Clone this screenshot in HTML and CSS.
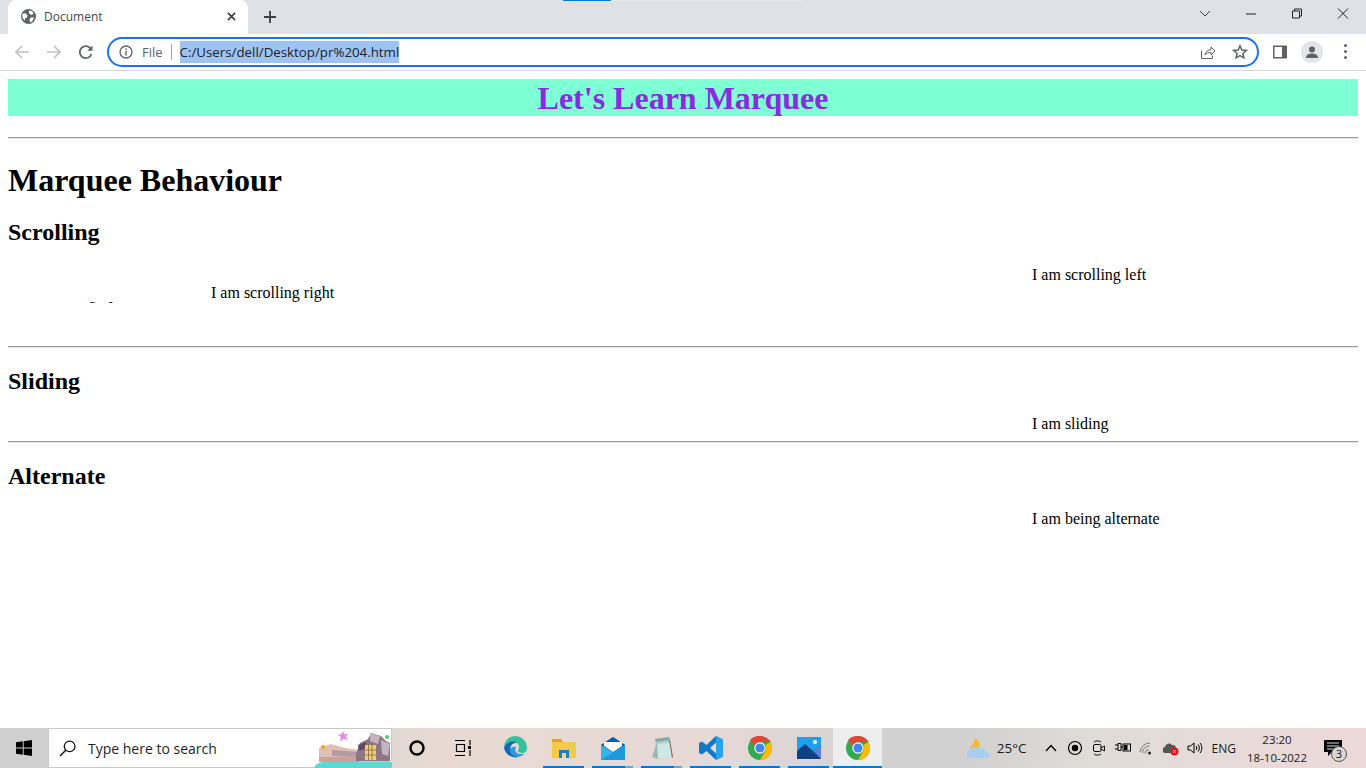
FILE: index.html
```html
<!DOCTYPE html>
<html lang="en">
<head>
    <meta charset="UTF-8">
    <title>Document</title>
    <link rel="stylesheet" href="styles.css">
</head>
<body>
    <div class="screen">
        <div class="tabstrip">
            <div class="load-line"></div>
            <div class="load-rest"></div>
            <div class="tab">
                <svg class="favicon" viewBox="0 0 16 16"><circle cx="8" cy="8" r="8" fill="#5f6368"/><path d="M1.500 5l3-.5 2.500 2.500-1 2.500H4.500l-.5 3-2.500-3.500zM8.500 1.500l3.500.8 1.500 2.700-2.500 1.500-2.500-2zM10.500 9h3.500l-1.500 3.500-2.500 2-1-3z" fill="#fff"/></svg>
                <span class="tab-title">Document</span>
                <svg class="tab-close" viewBox="0 0 10 10"><path d="M1 1l8 8M9 1l-8 8" stroke="#3c4043" stroke-width="1.800" fill="none"/></svg>
            </div>
            <svg class="new-tab" viewBox="0 0 12 12"><path d="M6 0v12M0 6h12" stroke="#3c4043" stroke-width="1.800" fill="none"/></svg>
            <div class="window-controls">
                <svg class="win-icon" viewBox="0 0 12 12"><path d="M1 3.500l5 5 5-5" stroke="#3c4043" fill="none"/></svg>
                <svg class="win-icon" viewBox="0 0 12 12"><path d="M1 6.500h10" stroke="#202124" fill="none"/></svg>
                <svg class="win-icon" viewBox="0 0 12 12"><path d="M1.500 3.500h7v7h-7zM3.500 3.500v-2h7v7h-2" stroke="#202124" fill="none"/></svg>
                <svg class="win-icon" viewBox="0 0 12 12"><path d="M1 1l10 10M11 1l-10 10" stroke="#202124" fill="none"/></svg>
            </div>
        </div>

        <div class="toolbar">
            <svg class="nav-icon" viewBox="0 0 16 16"><path d="M15 8H2M8 2L2 8l6 6" stroke="#bdc1c6" stroke-width="1.700" fill="none"/></svg>
            <svg class="nav-icon" viewBox="0 0 16 16"><path d="M1 8h13M8 2l6 6-6 6" stroke="#bdc1c6" stroke-width="1.700" fill="none"/></svg>
            <svg class="nav-icon" viewBox="0 0 16 16"><path d="M13.500 10a6 6 0 1 1-.6-5" stroke="#5f6368" stroke-width="1.800" fill="none"/><path d="M14.500 1.500v5.200h-5.200z" fill="#5f6368"/></svg>
            <div class="omnibox">
                <svg class="info-icon" viewBox="0 0 14 14"><circle cx="7" cy="7" r="6" stroke="#5f6368" stroke-width="1.300" fill="none"/><path d="M7 6v4.500M7 3.500v1.500" stroke="#5f6368" stroke-width="1.400"/></svg>
                <span class="scheme">File</span>
                <span class="divider"></span>
                <span class="url">C:/Users/dell/Desktop/pr%204.html</span>
                <svg class="share-icon" viewBox="0 0 16 16"><path d="M1.500 6.500v8h11v-3" stroke="#5f6368" fill="none"/><path d="M5 11c.5-3.500 3-5.300 6-5.300V3l4 4-4 4V8.300c-2.500 0-4.500.8-6 2.700z" stroke="#5f6368" fill="none"/></svg>
                <svg class="star-icon" viewBox="0 0 16 16"><path d="M8 1.800l1.800 4.200 4.500.4-3.400 3 1 4.400L8 11.500l-3.900 2.300 1-4.400-3.400-3 4.500-.4z" stroke="#5f6368" stroke-width="1.500" fill="none"/></svg>
            </div>
            <svg class="side-icon" viewBox="0 0 14 14"><rect width="14" height="13" y="0.500" fill="#5f6368"/><rect x="1.500" y="2" width="7.500" height="10" fill="#fff"/></svg>
            <div class="avatar"><svg viewBox="0 0 14 14"><circle cx="7" cy="4.500" r="3" fill="#5f6368"/><path d="M1 13c0-3.500 3-4.500 6-4.500s6 1 6 4.500z" fill="#5f6368"/></svg></div>
            <div class="menu-dots"><i></i><i></i><i></i></div>
        </div>

        <main class="page">
            <div class="banner"><h1>Let's Learn Marquee</h1></div>
            <hr>
            <h1 class="title">Marquee Behaviour</h1>
            <h2>Scrolling</h2>
            <div class="scroll-row">
                <div class="up-box"><div class="up-text">I am scrolling up</div></div>
                <div class="right-text">I am scrolling right</div>
                <div class="left-text">I am scrolling left</div>
            </div>
            <hr class="rule-scroll">
            <h2>Sliding</h2>
            <div class="line-row">I am sliding</div>
            <hr class="rule-slide">
            <h2>Alternate</h2>
            <div class="line-row">I am being alternate</div>
        </main>

        <footer class="taskbar">
            <svg class="start" viewBox="0 0 16 16"><path d="M0 2.300l6.800-1v6.300H0zM7.700 1.200L16 0v7.600H7.700zM0 8.400h6.800v6.300l-6.800-1zM7.700 8.400H16V16l-8.300-1.200z" fill="#000"/></svg>
            <div class="search">
                <svg class="search-icon" viewBox="0 0 16 16"><circle cx="10" cy="6" r="5" stroke="#111" stroke-width="1.200" fill="none"/><path d="M6.300 9.700L1 15" stroke="#111" stroke-width="1.400"/></svg>
                <span class="search-text">Type here to search</span>
                <svg class="search-art" viewBox="0 0 78 38">
                    <path d="M0 38c2-5 6-6 12-6h66v6z" fill="#62d6d6"/>
                    <path d="M5 32V18l12-4 14 4 14 2 31 6v6z" fill="#e0bfb4"/>
                    <path d="M5 27h40v5H5z" fill="#c9a39a"/>
                    <path d="M18 20l27 2v5l-27-1z" fill="#b79aa0"/>
                    <path d="M42 24l4-11 8-4 3-6 10 3 5 5 4 2v18H42z" fill="#8c7684"/>
                    <path d="M56 3l10 3-2 8-8-3zM67 10l9 4-2 12-6-2z" fill="#c4b4bd"/>
                    <path d="M44 15l8-3 1 6-8 3z" fill="#5f4c60"/>
                    <rect x="51" y="15" width="11" height="15" fill="#f0cd6e"/>
                    <path d="M54.500 15v15M58 15v15M51 20h11M51 25h11" stroke="#8a6a3e" stroke-width=".8"/>
                    <path d="M29 1l1.500 3.500 4-1-2.500 3 2 4-4-1.800-4 2.800.8-4.500-3.300-2.500 4-.2z" fill="#e58be8"/>
                    <circle cx="9" cy="17" r="2" fill="#f5a623"/><circle cx="73" cy="7" r="2" fill="#4cc97a"/>
                </svg>
            </div>
            <div class="task-icons">
                <div class="task"><svg class="cortana" viewBox="0 0 18 18"><circle cx="9" cy="9" r="6.500" stroke="#000" stroke-width="2.400" fill="none"/></svg></div>
                <div class="task"><svg class="taskview" viewBox="0 0 18 18"><path d="M1 1.500h10M1 16.500h10M2.500 5.500h8v7h-8zM16 1v5M16 11v6" stroke="#000" stroke-width="1.200" fill="none"/><rect x="14" y="7" width="3" height="3" fill="#000"/></svg></div>
                <div class="task"><svg viewBox="0 0 24 24"><path d="M12 0a12 12 0 0 1 12 12c0 3-2 5-5 5-3 0-5-1.500-4-3 .5-1 1-1.500 1-3 0-3-3-5-6-5C6 6 2 9 1 12 1 5 6 0 12 0z" fill="#36c0a0"/><path d="M1 12c1-4 5-6.500 9-6.500 2 0 3 .5 3.500 1.500-5 0-6.500 3.500-6 7 .5 4 4 6.500 8 6.500 1 0 2-.2 3-.6A12 12 0 0 1 1 12z" fill="#1466b8"/><path d="M7 14c.5 4 4 7 8.500 6.500 3-.3 5-1.500 6-3-1 .5-2 .5-3 .5-4 0-7-2-6-5 0-.5.300-1.500 1-2-3-.5-6 0-6.500 3z" fill="#2a9fe0"/></svg></div>
                <div class="task running"><svg viewBox="0 0 24 24"><path d="M0 3h9l2 3h13v16H0z" fill="#f7c94b"/><path d="M0 3h9l2 3H0z" fill="#d9a032"/><path d="M7 14h10v8h-3v-5h-4v5H7z" fill="#1b7fc4"/><rect x="10" y="17" width="4" height="5" fill="#f6d98a"/></svg></div>
                <div class="task running partial"><svg viewBox="0 0 24 24"><path d="M0 9L12 1l12 8v15H0z" fill="#1c8ed8"/><path d="M0 9L12 1l12 8-12 7z" fill="#0a5ea8"/><path d="M3 10V6h18v4l-9 6z" fill="#fff"/><path d="M0 9l12 8 12-8v15H0z" fill="#35b5ee"/><path d="M0 24l24-15v15z" fill="#1d9ade"/></svg></div>
                <div class="task running partial"><svg viewBox="0 0 24 24"><path d="M5 3l14-2 3 20-15 2z" fill="#a8d0d2"/><path d="M5 3l14-2 1 3-14 2z" fill="#88a8a8"/><path d="M6 8l14-1 2 14-15 2z" fill="#cfe8e6"/><path d="M2 21l5-15 1 17z" fill="#9ab8b8"/><path d="M20 4l3 17-1 1-3-18z" fill="#7a6a55"/></svg></div>
                <div class="task running"><svg viewBox="0 0 24 24"><path d="M17 0l7 3.500v17L17 24 7.500 15 3 18.500 0 17V7l3-1.500L7.500 9zM17 6.500L11 12l6 5.500z" fill="#0f7ac8"/><path d="M17 0l7 3.500v17L17 24z" fill="#2aa3ea"/></svg></div>
                <div class="task running"><svg viewBox="0 0 24 24"><use href="#chrome"/></svg></div>
                <div class="task running"><svg viewBox="0 0 24 24"><rect width="24" height="22" y="1" fill="#1aa3e8"/><path d="M0 23V15l8-7 8 7 8-5v13z" fill="#123f82"/><path d="M16 15l8-5v13z" fill="#5a80d8"/><circle cx="18" cy="6" r="2" fill="#fff"/></svg></div>
                <div class="task running active"><svg viewBox="0 0 24 24">
                    <defs><g id="chrome">
                        <circle cx="12" cy="12" r="12" fill="#34a853"/>
                        <path d="M12 0a12 12 0 0 1 10.400 6H12a6 6 0 0 0-5.500 3.500L2 3.800A12 12 0 0 1 12 0z" fill="#ea4335"/>
                        <path d="M22.400 6A12 12 0 0 1 12 24l5-8.600A6 6 0 0 0 17.500 9z" fill="#fbbc04"/>
                        <circle cx="12" cy="12" r="5.700" fill="#fff"/><circle cx="12" cy="12" r="4.500" fill="#4285f4"/>
                    </g></defs>
                    <use href="#chrome"/></svg></div>
            </div>
            <div class="tray">
                <svg class="weather" viewBox="0 0 24 22"><path d="M3 10C6 10 9 7 8.500 1c5 2 6.500 7 4 11-3 2-7 1-9.500-2z" fill="#f5b82e"/><path d="M5 21a4 4 0 0 1-.5-8c1-3 6-4.500 9-1.500 3-1 6 1 5.500 3.500 3 0 4.500 1.500 4.500 3 0 2-2 3-4 3z" fill="#a9cdee"/></svg>
                <span class="temp">25°C</span>
                <svg class="tray-chevron" viewBox="0 0 12 8"><path d="M1 7l5-5.500L11 7" stroke="#000" stroke-width="1.300" fill="none"/></svg>
                <svg class="tray-icon" viewBox="0 0 16 16"><circle cx="8" cy="8" r="6.500" stroke="#000" stroke-width="1.200" fill="none"/><circle cx="8" cy="8" r="3.200" fill="#000"/></svg>
                <svg class="tray-icon" viewBox="0 0 16 16"><rect x="2.500" y="4.500" width="7.500" height="7" rx="1.500" stroke="#000" fill="none"/><path d="M10 8l3.500-2v5L10 9M3 2c2-1.500 5-1.500 7 0M3 14c2 1.500 5 1.500 7 0" stroke="#000" stroke-width=".9" fill="none"/></svg>
                <svg class="tray-icon" viewBox="0 0 16 16"><path d="M0 5h3M0 9h3M3 3.500h3v7H3zM6 7h2" stroke="#000" fill="none"/><rect x="8" y="4" width="7.500" height="7" stroke="#000" fill="none"/><rect x="9" y="5" width="3.500" height="5" fill="#000"/></svg>
                <svg class="tray-icon" viewBox="0 0 16 16"><path d="M1 12a10 10 0 0 1 10-9M3.500 13a7 7 0 0 1 7-7M6 13.500a4 4 0 0 1 4-4" stroke="#777" stroke-width="1" fill="none"/><circle cx="10.500" cy="13" r="1.500" fill="#222"/></svg>
                <svg class="tray-icon" viewBox="0 0 16 16"><path d="M3 13a3 3 0 0 1-1-6 4 4 0 0 1 7-2 3.500 3.500 0 0 1 4 3v1H8v4z" fill="#555"/><circle cx="11.500" cy="11.500" r="4" fill="#e81123"/><path d="M10 10l3 3M13 10l-3 3" stroke="#fff"/></svg>
                <svg class="tray-icon" viewBox="0 0 16 16"><path d="M1 6h2.500L7 3v10l-3.500-3H1z" stroke="#000" fill="none"/><path d="M9 6c1 1 1 3 0 4M11 4.500c1.800 2 1.800 5 0 7M13 3c2.500 3 2.500 7 0 10" stroke="#000" fill="none"/></svg>
                <span class="lang">ENG</span>
                <div class="clock"><span>23:20</span><span>18-10-2022</span></div>
                <div class="notify">
                    <svg viewBox="0 0 18 16"><path d="M0 0h18v12H8l-4 4v-4H0z" fill="#000"/><path d="M3 3h12M3 6h12M3 9h8" stroke="#ddd"/></svg>
                    <span class="notify-count">3</span>
                </div>
            </div>
        </footer>
    </div>
</body>
</html>
```

FILE: styles.css
```css
* {
    box-sizing: border-box;
}
body {
    margin: 0;
    background-color: #fff;
}
svg {
    display: block;
}
.screen {
    width: 1366px;
    height: 768px;
    overflow: hidden;
    display: flex;
    flex-direction: column;
}

/* browser frame */
.tabstrip {
    height: 34px;
    flex: none;
    background-color: #dee1e6;
    display: flex;
    align-items: flex-end;
    position: relative;
    padding-left: 8px;
}
.load-line {
    position: absolute;
    top: 0;
    left: 563px;
    width: 48px;
    height: 1px;
    background-color: #0a7cd6;
}
.load-rest {
    position: absolute;
    top: 0;
    left: 612px;
    width: 190px;
    height: 1px;
    background-color: #e8e9eb;
}
.tab {
    width: 240px;
    height: 34px;
    background-color: #fff;
    border-radius: 8px 8px 0 0;
    display: flex;
    align-items: center;
    padding: 0 12px 2px 13px;
}
.favicon {
    width: 15px;
    height: 15px;
}
.tab-title {
    flex: 1;
    margin-left: 8px;
    font: 12px "Open Sans", sans-serif;
    color: #45474a;
}
.tab-close {
    width: 9px;
    height: 9px;
}
.new-tab {
    width: 12px;
    height: 12px;
    margin: 0 0 11px 16px;
}
.window-controls {
    margin-left: auto;
    height: 34px;
    display: flex;
    padding-bottom: 7px;
}
.win-icon {
    width: 46px;
    height: 27px;
    padding: 7px 17px;
}
.toolbar {
    height: 37px;
    flex: none;
    background-color: #fff;
    border-bottom: 1px solid #d6d7da;
    display: flex;
    align-items: center;
    padding: 0 0 1px 14px;
}
.nav-icon {
    width: 16px;
    height: 16px;
    margin-right: 16px;
}
.omnibox {
    width: 1152px;
    height: 30px;
    margin-left: -3px;
    border: 2px solid #1a73e8;
    border-radius: 15px;
    display: flex;
    align-items: center;
    padding: 0 9px 0 10px;
}
.info-icon {
    width: 14px;
    height: 14px;
}
.scheme {
    margin-left: 9px;
    font: 13px "Open Sans", sans-serif;
    color: #5f6368;
}
.divider {
    width: 1px;
    height: 16px;
    margin: 0 8px 0 8px;
    background-color: #a0a3a8;
}
.url {
    font: 13.300px "Open Sans", sans-serif;
    color: #202124;
    background-color: #9dc3f5;
    line-height: 22px;
}
.share-icon {
    width: 16px;
    height: 16px;
    margin-left: auto;
}
.star-icon {
    width: 16px;
    height: 16px;
    margin-left: 16px;
}
.side-icon {
    width: 14px;
    height: 14px;
    margin-left: 14px;
}
.avatar {
    width: 22px;
    height: 22px;
    margin-left: 14px;
    border-radius: 50%;
    background-color: #e3e5e8;
    padding: 4px;
}
.menu-dots {
    margin-left: 21px;
    display: flex;
    flex-direction: column;
    gap: 3px;
}
.menu-dots i {
    width: 3px;
    height: 3px;
    border-radius: 50%;
    background-color: #5f6368;
}

/* page content */
.page {
    flex: 1;
    background-color: #fff;
    padding: 8px;
    font-family: "Liberation Serif", serif;
    font-size: 16px;
    color: #000;
}
.banner {
    height: 37px;
    background-color: aquamarine;
    text-align: center;
}
.banner h1 {
    margin: 0;
    font-size: 32px;
    line-height: 38px;
    color: blueviolet;
}
hr {
    margin: 21px 0 0;
    height: 2px;
    border: none;
    border-top: 1px solid #9a9a9a;
    border-bottom: 1px solid #e6e6e6;
}
.title {
    margin: 23px 0 0;
    font-size: 32px;
    line-height: 37px;
}
h2 {
    margin: 20px 0 0;
    font-size: 24px;
    line-height: 27px;
}
.scroll-row {
    height: 100px;
    display: flex;
    align-items: flex-start;
}
.up-box {
    width: 203px;
    height: 2px;
    margin-top: 56px;
    overflow: hidden;
}
.up-text {
    margin-top: -17px;
    line-height: 18px;
}
.right-text {
    width: 821px;
    margin-top: 38px;
    line-height: 18px;
}
.left-text {
    margin-top: 20px;
    line-height: 18px;
}
.rule-scroll {
    margin: 0;
}
.line-row {
    padding: 20px 0 0 1024px;
    line-height: 18px;
    height: 46px;
}
.rule-slide {
    margin-top: 0;
}

/* taskbar */
.taskbar {
    height: 40px;
    flex: none;
    display: flex;
    align-items: center;
    background: linear-gradient(90deg, #cfcfcf 0%, #d8d6d4 25%, #e8dad2 32%, #e6d9d6 52%, #d2d1d1 65%, #d1d1d1 71%, #e0dcd8 80%, #ecd9d8 100%);
}
.start {
    width: 16px;
    height: 16px;
    margin-left: 16px;
}
.search {
    width: 344px;
    height: 40px;
    margin-left: 16px;
    background-color: #fff;
    border: 1px solid #c8c8c8;
    display: flex;
    align-items: center;
    padding-left: 10px;
    position: relative;
}
.search-icon {
    width: 17px;
    height: 17px;
}
.search-text {
    margin-left: 12px;
    font: 14px "Open Sans", sans-serif;
    color: #1f1f1f;
}
.search-art {
    position: absolute;
    right: -1px;
    bottom: -1px;
    width: 78px;
    height: 38px;
}
.task-icons {
    display: flex;
}
.task {
    width: 49px;
    height: 40px;
    display: flex;
    align-items: center;
    justify-content: center;
    position: relative;
}
.task svg {
    width: 24px;
    height: 24px;
}
.task svg.cortana,
.task svg.taskview {
    width: 18px;
    height: 18px;
}
.task svg.taskview {
    margin-right: 5px;
}
.task.running::after {
    content: "";
    position: absolute;
    left: 4px;
    right: 4px;
    bottom: 0;
    height: 2px;
    background-color: #0078d4;
}
.task.partial::after {
    background: linear-gradient(90deg, #0078d4 80%, #66a8dc 80%);
}
.task.active {
    background-color: #eeeeee;
}
.task.active::after {
    left: 0;
    right: 0;
}
.tray {
    margin-left: auto;
    display: flex;
    align-items: center;
    height: 40px;
    padding-right: 24px;
}
.weather {
    width: 24px;
    height: 22px;
    margin-right: 7px;
}
.temp {
    font: 13.500px "Open Sans", sans-serif;
    color: #1a1a1a;
    margin-right: 18px;
}
.tray-chevron {
    width: 12px;
    height: 8px;
    margin-right: 10px;
}
.tray-icon {
    width: 16px;
    height: 16px;
    margin-right: 8px;
}
.lang {
    font: 12px "Open Sans", sans-serif;
    color: #1a1a1a;
    margin-left: 1px;
}
.clock {
    width: 72px;
    margin-left: 5px;
    display: flex;
    flex-direction: column;
    align-items: center;
    gap: 3px;
    font: 11.500px/15px "Open Sans", sans-serif;
    color: #1a1a1a;
}
.notify {
    margin-left: 11px;
    position: relative;
    width: 18px;
    height: 16px;
}
.notify svg {
    width: 18px;
    height: 16px;
}
.notify-count {
    position: absolute;
    left: 7px;
    top: 6px;
    width: 16px;
    height: 16px;
    border-radius: 50%;
    border: 1px solid #555;
    background-color: #d9d5d3;
    font: 11px/14px "Open Sans", sans-serif;
    text-align: center;
    color: #111;
}
```
